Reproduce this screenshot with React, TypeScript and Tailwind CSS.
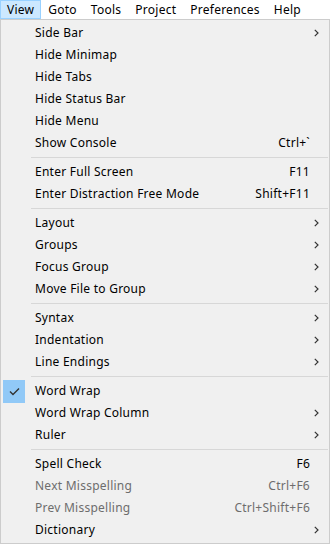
import React from 'react';

type Item =
  | { sep: true }
  | { label: string; shortcut?: string; sub?: boolean; disabled?: boolean; checked?: boolean; sep?: false };

const menus = ['View', 'Goto', 'Tools', 'Project', 'Preferences', 'Help'];

const items: Item[] = [
  { label: 'Side Bar', sub: true },
  { label: 'Hide Minimap' },
  { label: 'Hide Tabs' },
  { label: 'Hide Status Bar' },
  { label: 'Hide Menu' },
  { label: 'Show Console', shortcut: 'Ctrl+`' },
  { sep: true },
  { label: 'Enter Full Screen', shortcut: 'F11' },
  { label: 'Enter Distraction Free Mode', shortcut: 'Shift+F11' },
  { sep: true },
  { label: 'Layout', sub: true },
  { label: 'Groups', sub: true },
  { label: 'Focus Group', sub: true },
  { label: 'Move File to Group', sub: true },
  { sep: true },
  { label: 'Syntax', sub: true },
  { label: 'Indentation', sub: true },
  { label: 'Line Endings', sub: true },
  { sep: true },
  { label: 'Word Wrap', checked: true },
  { label: 'Word Wrap Column', sub: true },
  { label: 'Ruler', sub: true },
  { sep: true },
  { label: 'Spell Check', shortcut: 'F6' },
  { label: 'Next Misspelling', shortcut: 'Ctrl+F6', disabled: true },
  { label: 'Prev Misspelling', shortcut: 'Ctrl+Shift+F6', disabled: true },
  { label: 'Dictionary', sub: true },
];

const Chevron = () => (
  <svg width="5" height="8" viewBox="0 0 5 8" className="block">
    <path d="M0.8 0.8 L4 4 L0.8 7.2" fill="none" stroke="#333" strokeWidth="1.2" />
  </svg>
);

const Check = () => (
  <svg width="11" height="9" viewBox="0 0 11 9" className="block">
    <path d="M1 4.5 L4 7.5 L10 1.5" fill="none" stroke="#333" strokeWidth="1.4" />
  </svg>
);

export default function App() {
  return (
    <div
      className="w-[330px] h-[544px] bg-white text-[12px] tracking-[0.25px] text-black overflow-hidden"
      style={{ fontFamily: '"Noto Sans", "Noto Sans CJK SC", sans-serif' }}
    >
      {/* Menu bar */}
      <div className="flex h-[19px] items-stretch">
        {menus.map((m, i) => (
          <div
            key={m}
            className={`flex items-center px-[6px] leading-none ${
              i === 0 ? 'bg-[#cce8ff] border border-[#99d1ff]' : 'border border-transparent'
            }`}
          >
            {m}
          </div>
        ))}
      </div>

      {/* Dropdown */}
      <div className="h-[525px] bg-[#f0f0f0] border border-[#cccccc] pt-[2px]">
        {items.map((it, i) =>
          it.sep ? (
            <div key={i} className="h-[7px] flex items-center pl-[30px] pr-[1px]">
              <div className="h-px w-full bg-[#d7d7d7]" />
            </div>
          ) : (
            <div
              key={i}
              className={`flex items-center h-[22px] ${it.disabled ? 'text-[#6d6d6d]' : 'text-black'}`}
            >
              <div className="w-[34px] h-full flex items-center pl-[2px]">
                {it.checked && (
                  <div className="w-[22px] h-[23px] bg-[#91c9f7] flex items-center justify-center">
                    <Check />
                  </div>
                )}
              </div>
              <span className="flex-1 whitespace-nowrap">{it.label}</span>
              {it.shortcut && <span className="whitespace-nowrap">{it.shortcut}</span>}
              <div className="w-[19px] flex items-center pl-[4px]">
                {it.sub && <Chevron />}
              </div>
            </div>
          )
        )}
      </div>
    </div>
  );
}
